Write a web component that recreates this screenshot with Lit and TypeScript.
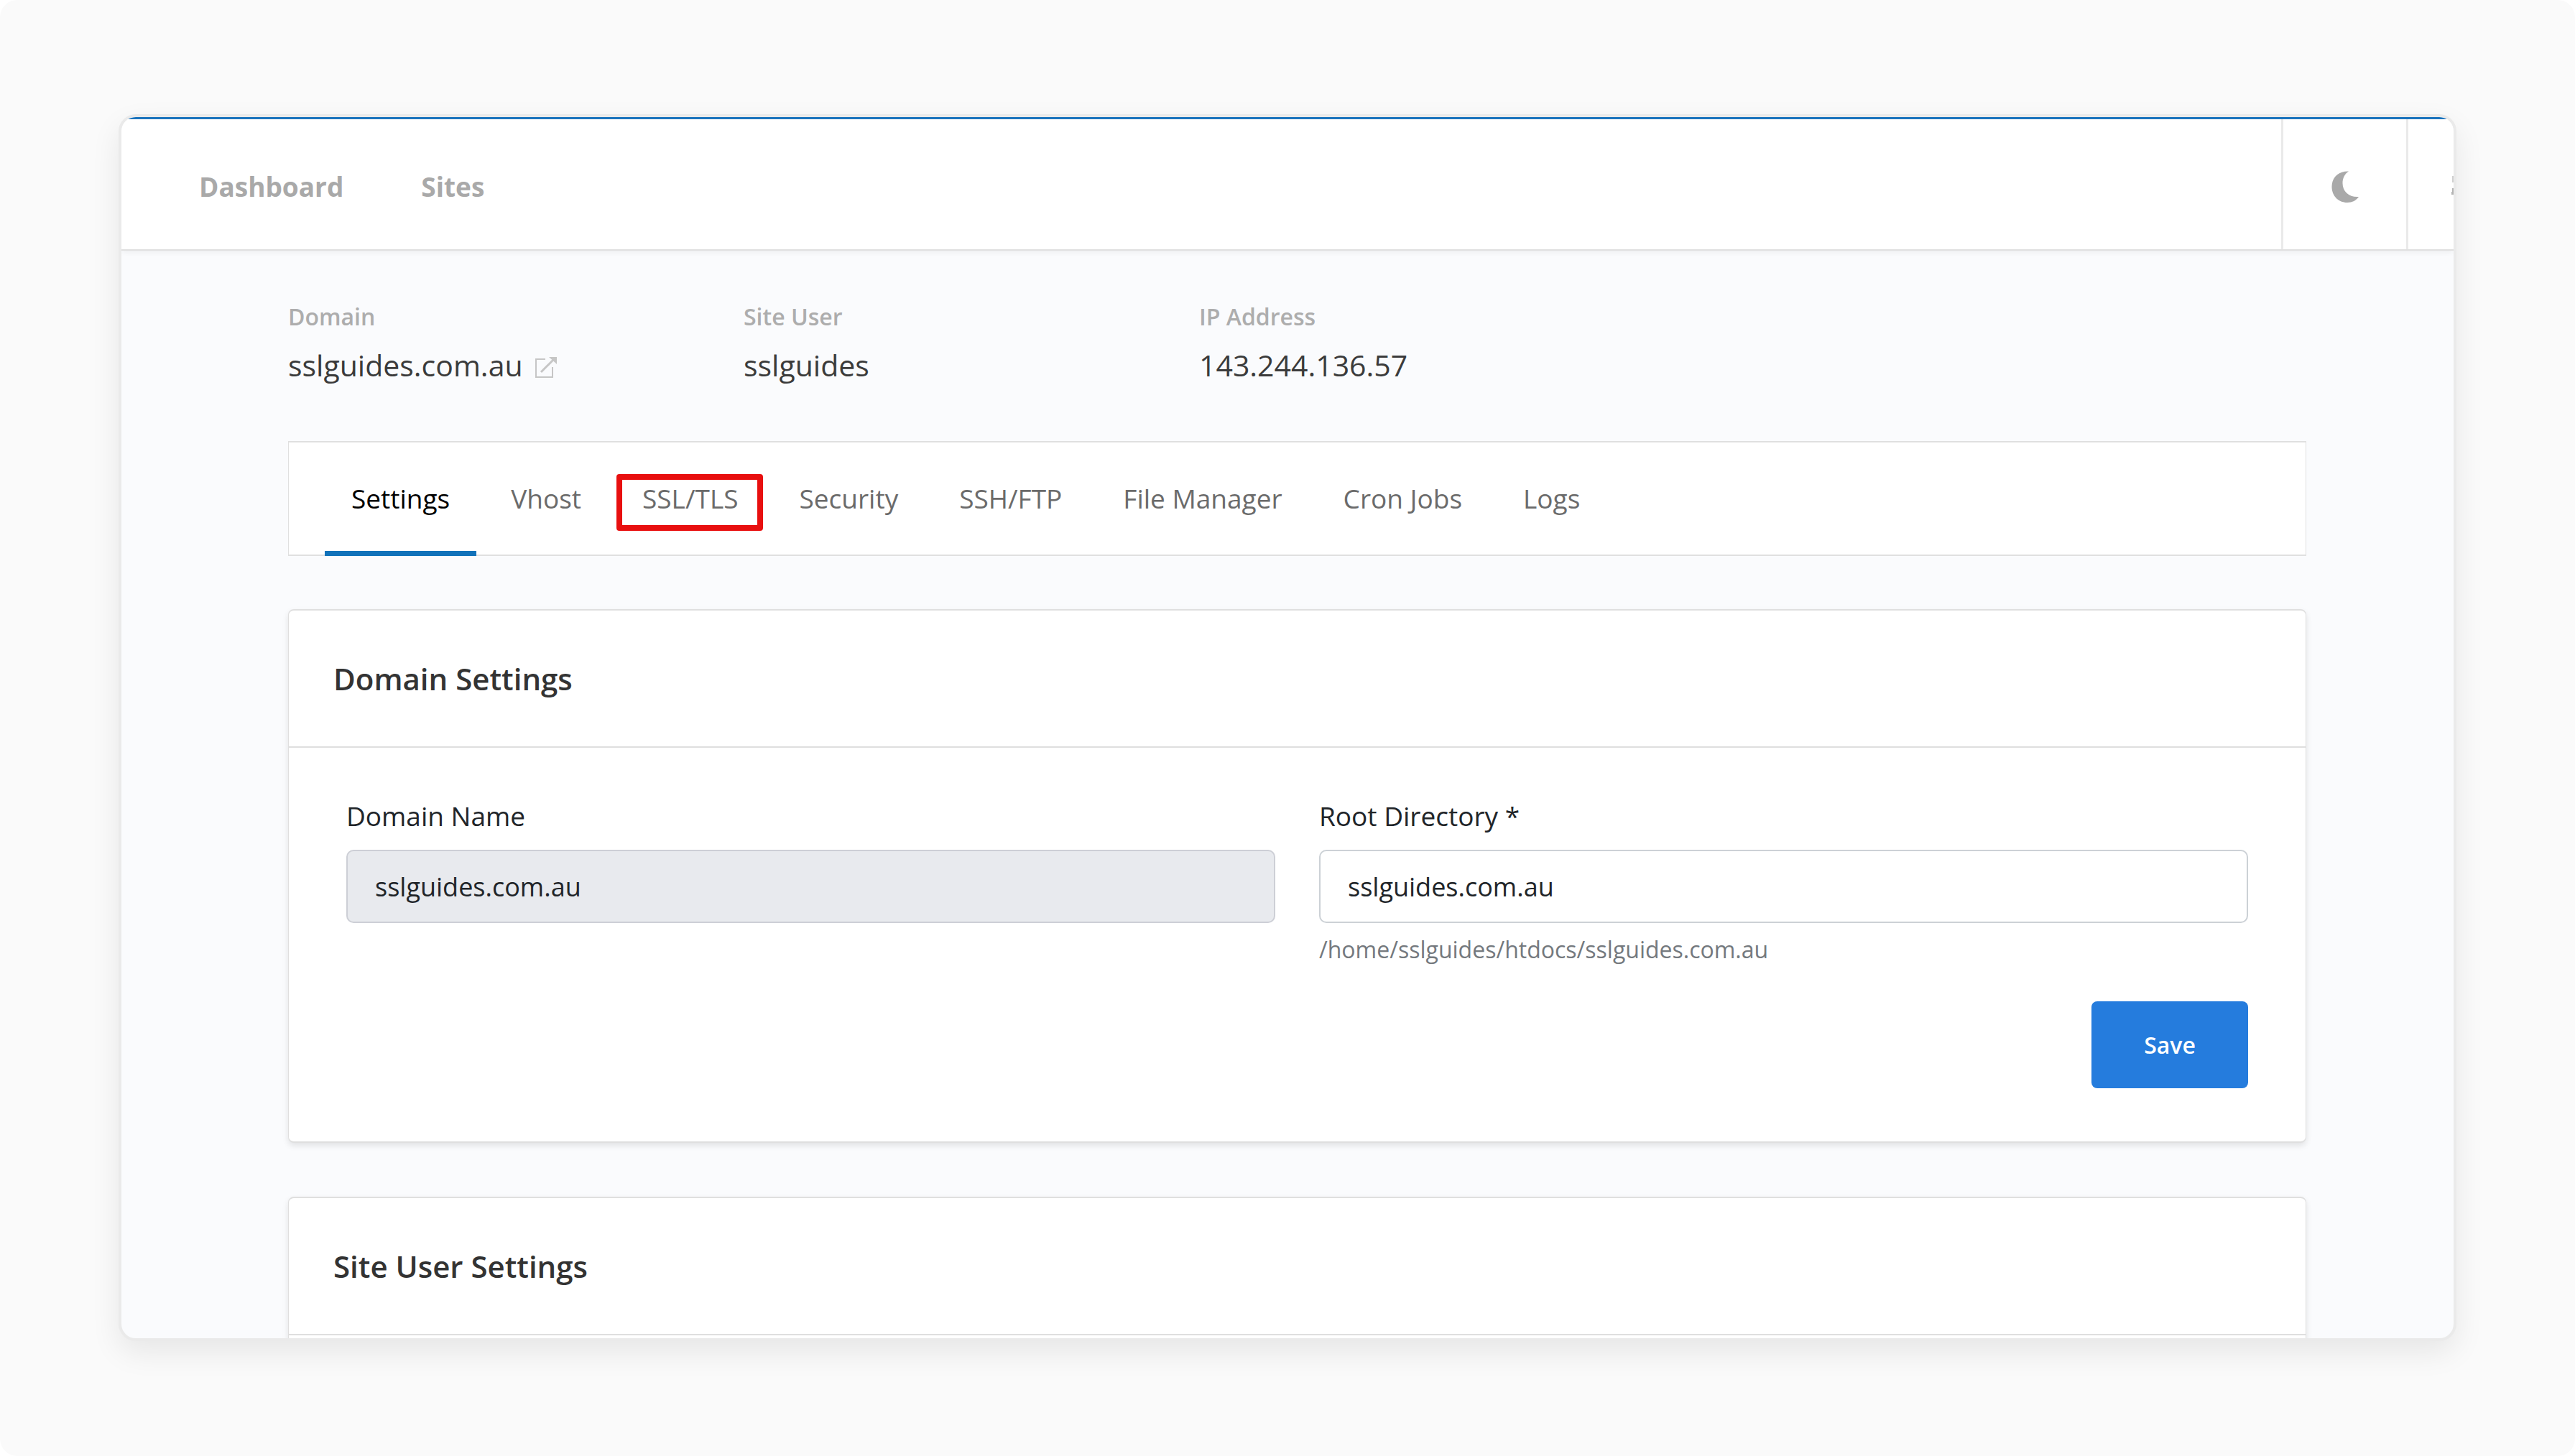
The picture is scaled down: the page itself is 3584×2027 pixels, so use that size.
import { LitElement, html, css } from "lit";
import { customElement, property } from "lit/decorators.js";

const shared = css`
  * {
    box-sizing: border-box;
  }
  h1,
  h2,
  p,
  dl,
  dt,
  dd,
  ul {
    margin: 0;
    padding: 0;
  }
  a {
    color: inherit;
    text-decoration: none;
  }
`;

@customElement("settings-card")
class SettingsCard extends LitElement {
  @property() heading = "";

  static styles = [
    shared,
    css`
      :host {
        display: block;
        background: #fff;
        border: 1px solid #dfdfdf;
        border-width: 2px 1px;
        border-radius: 8px;
        box-shadow: 0 4px 8px rgba(0, 0, 0, 0.1);
      }
      .head {
        padding: 63px 62px 62px;
        border-bottom: 2px solid #dfdfdf;
      }
      .title {
        font-size: 42px;
        line-height: 64px;
        font-weight: 600;
        color: #333;
      }
      .body {
        padding: 64px 80px 74px;
      }
    `,
  ];

  render() {
    return html`
      <header class="head"><h2 class="title">${this.heading}</h2></header>
      <div class="body"><slot></slot></div>
    `;
  }
}

@customElement("app-root")
class AppRoot extends LitElement {
  static styles = [
    shared,
    css`
      :host {
        display: block;
        background: #fff;
        font-family: "Open Sans", "Noto Sans", sans-serif;
        font-size: 37px;
        color: #212529;
      }
      .page {
        display: flex;
        height: 100vh;
        padding: 159px 165px 160px;
        border-radius: 24px;
        background: #fafafa;
      }
      .window {
        flex: 1;
        min-width: 0;
        overflow: hidden;
        border: 4px solid #eaeaea;
        border-radius: 24px;
        background: #fafbfd;
        box-shadow: 0 16px 40px rgba(0, 0, 0, 0.08);
      }
      .topbar {
        display: flex;
        height: 186px;
        border-top: 3px solid #1a73bd;
        border-bottom: 2px solid #e0e0e0;
        background: #fff;
        box-shadow: 0 2px 8px rgba(0, 0, 0, 0.06);
      }
      .nav {
        flex: 1;
        display: flex;
        align-items: center;
        gap: 108px;
        padding: 6px 0 0 108px;
        font-size: 37px;
        font-weight: 700;
        color: #a9a9a9;
      }
      .tool {
        display: flex;
        align-items: center;
        justify-content: center;
        width: 174px;
        padding: 6px 0 0;
        border: 0;
        border-left: 3px solid #eaeaea;
        background: none;
        color: #a9a9a9;
      }
      .tool.account {
        width: 66px;
        justify-content: flex-end;
        overflow: hidden;
      }
      .moon {
        width: 38px;
        height: 44px;
      }
      .sliver {
        width: 3px;
        height: 30px;
      }
      .content {
        padding: 67px 205px 0 232px;
      }
      .facts {
        display: flex;
      }
      .fact {
        width: 634px;
      }
      .term {
        font-size: 32px;
        line-height: 50px;
        font-weight: 600;
        color: #adadad;
      }
      .value {
        display: flex;
        align-items: center;
        gap: 16px;
        padding-top: 12px;
        font-size: 41px;
        line-height: 60px;
        color: #3b3b3b;
      }
      .external {
        display: block;
        width: 32px;
        height: 40px;
        padding-top: 8px;
      }
      .tabs {
        display: flex;
        gap: 11px;
        height: 160px;
        margin-top: 76px;
        padding-left: 50px;
        border: 1px solid #e0e0e0;
        border-width: 2px 1px;
        background: #fff;
        list-style: none;
      }
      .tab {
        position: relative;
        display: flex;
        align-items: center;
        height: 158px;
        padding: 4px 37px 0;
        border-bottom: 7px solid transparent;
        color: #6b6b6b;
      }
      .tab.active {
        color: #000;
        border-bottom-color: #1172ba;
      }
      .marker {
        position: absolute;
        inset: 44px 3px 28px 1px;
        border: 8px solid #e80f0f;
        border-radius: 4px;
      }
      .cards {
        display: grid;
        gap: 75px;
        margin-top: 74px;
      }
      .form {
        display: grid;
        grid-template-columns: 1fr 1fr;
        column-gap: 61px;
      }
      .field {
        display: flex;
        flex-direction: column;
      }
      .label {
        line-height: 62px;
      }
      .input {
        width: 100%;
        height: 102px;
        margin-top: 16px;
        padding: 0 38px;
        border: 2px solid #ccd1d6;
        border-radius: 10px;
        background: #fff;
        font: inherit;
        font-size: 36px;
        color: inherit;
      }
      .input:disabled {
        background: #e8eaee;
        border-color: #cdcfd6;
        opacity: 1;
      }
      .hint {
        margin-top: 12px;
        font-size: 32px;
        line-height: 50px;
        color: #74797e;
      }
      .actions {
        grid-column: 1 / -1;
        display: flex;
        justify-content: flex-end;
        margin-top: 47px;
      }
      .save {
        width: 218px;
        height: 121px;
        border: 0;
        border-radius: 8px;
        background: #257cdd;
        color: #fff;
        font: inherit;
        font-size: 32px;
        font-weight: 600;
      }
    `,
  ];

  private tabs = ["Settings", "Vhost", "SSL/TLS", "Security", "SSH/FTP", "File Manager", "Cron Jobs", "Logs"];

  render() {
    return html`
      <div class="page">
        <div class="window">
          <header class="topbar">
            <nav class="nav">
              <a href="#dashboard">Dashboard</a>
              <a href="#sites">Sites</a>
            </nav>
            <button class="tool" aria-label="Dark mode">
              <svg class="moon" viewBox="0 0 38 44" aria-hidden="true">
                <path
                  d="M24 0.500C10 0 0.500 9 0.500 22S10 44 22 44C29 44 34.500 41 38 36C25 37 15.500 29 15.500 17C15.500 10 18.500 4 24 0.500Z"
                  fill="currentColor"
                />
              </svg>
            </button>
            <button class="tool account" aria-label="Account">
              <svg class="sliver" viewBox="0 0 3 30" aria-hidden="true">
                <path d="M1 0h2v9H1z" fill="#d0d0d0" />
                <path d="M1 17h2v9H0v-4h1z" fill="#b4b4b4" />
              </svg>
            </button>
          </header>
          <main class="content">
            <dl class="facts">
              <div class="fact">
                <dt class="term">Domain</dt>
                <dd class="value">
                  sslguides.com.au
                  <a href="#visit" aria-label="Open site">
                    <svg class="external" viewBox="0 0 32 32" fill="none" stroke="#c6c6c6" stroke-width="2" aria-hidden="true">
                      <path d="M15 4H2v25h23V15" />
                      <path d="M9 22L27 4" stroke-width="3" />
                      <path d="M20 1h11v10z" fill="#c6c6c6" stroke="none" />
                    </svg>
                  </a>
                </dd>
              </div>
              <div class="fact">
                <dt class="term">Site User</dt>
                <dd class="value">sslguides</dd>
              </div>
              <div class="fact">
                <dt class="term">IP Address</dt>
                <dd class="value">143.244.136.57</dd>
              </div>
            </dl>
            <ul class="tabs">
              ${this.tabs.map(
                (name, i) => html`<li>
                  <a class="tab ${i === 0 ? "active" : ""}" href="#${name}"
                    >${name}${name === "SSL/TLS" ? html`<span class="marker"></span>` : ""}</a
                  >
                </li>`
              )}
            </ul>
            <div class="cards">
              <settings-card heading="Domain Settings">
                <form class="form">
                  <div class="field">
                    <label class="label" for="domain">Domain Name</label>
                    <input class="input" id="domain" value="sslguides.com.au" disabled />
                  </div>
                  <div class="field">
                    <label class="label" for="root">Root Directory *</label>
                    <input class="input" id="root" value="sslguides.com.au" />
                    <p class="hint">/home/sslguides/htdocs/sslguides.com.au</p>
                  </div>
                  <div class="actions"><button class="save" type="button">Save</button></div>
                </form>
              </settings-card>
              <settings-card heading="Site User Settings"></settings-card>
            </div>
          </main>
        </div>
      </div>
    `;
  }
}
